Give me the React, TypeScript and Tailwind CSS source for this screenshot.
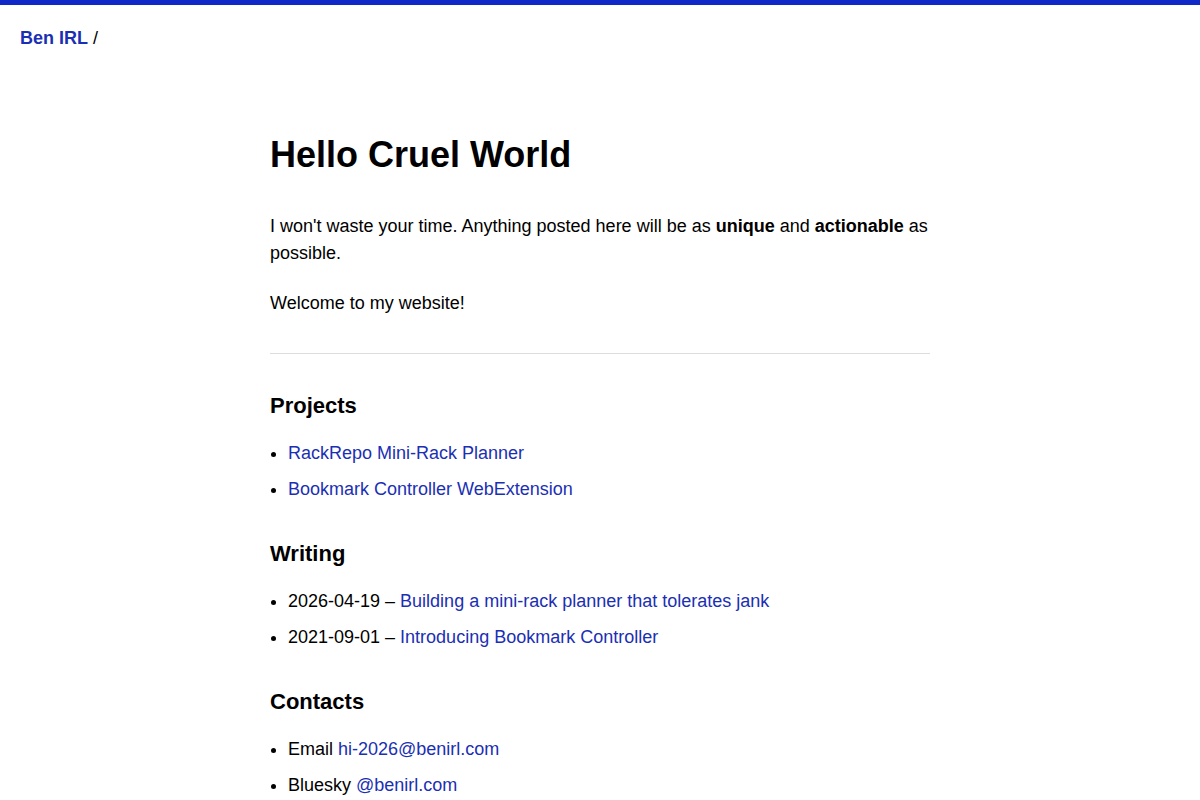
import React from "react";

const linkClass = "text-[#1b2fb5] hover:underline";

type Entry = { prefix?: string; label: string; href: string };

const projects: Entry[] = [
  { label: "RackRepo Mini-Rack Planner", href: "#" },
  { label: "Bookmark Controller WebExtension", href: "#" },
];

const writing: Entry[] = [
  { prefix: "2026-04-19 – ", label: "Building a mini-rack planner that tolerates jank", href: "#" },
  { prefix: "2021-09-01 – ", label: "Introducing Bookmark Controller", href: "#" },
];

const contacts: Entry[] = [
  { prefix: "Email ", label: "hi-2026@benirl.com", href: "#" },
  { prefix: "Bluesky ", label: "@benirl.com", href: "#" },
];

const Section = ({ title, items }: { title: string; items: Entry[] }) => (
  <section className="mt-[38px]">
    <h2 className="text-[22px] leading-[26px] font-bold">{title}</h2>
    <ul className="mt-[21px] list-disc pl-[18px] flex flex-col gap-[9px]">
      {items.map((item) => (
        <li key={item.label} className="leading-[27px]">
          {item.prefix}
          <a href={item.href} className={linkClass}>
            {item.label}
          </a>
        </li>
      ))}
    </ul>
  </section>
);

export default function App() {
  return (
    <div className="min-h-screen bg-white text-black text-[18px] font-['Liberation_Sans',Arial,sans-serif]">
      <div className="h-[5px] bg-[#1128c8]" />

      <header className="pt-[20px] px-5 leading-[27px]">
        <a href="#" className="font-bold text-[#1b2fb5]">
          Ben IRL
        </a>{" "}
        /
      </header>

      <main className="mx-auto w-[660px] pt-[82px] pb-16">
        <h1 className="text-[36px] leading-[42px] font-bold">Hello Cruel World</h1>

        <p className="mt-[37px] leading-[27px]">
          I won't waste your time. Anything posted here will be as <strong>unique</strong> and{" "}
          <strong>actionable</strong> as possible.
        </p>
        <p className="mt-[23px] leading-[27px]">Welcome to my website!</p>

        <hr className="mt-[36px] border-0 border-t border-[#dddddd]" />

        <div className="pt-px">
          <Section title="Projects" items={projects} />
          <Section title="Writing" items={writing} />
          <Section title="Contacts" items={contacts} />
        </div>
      </main>
    </div>
  );
}
